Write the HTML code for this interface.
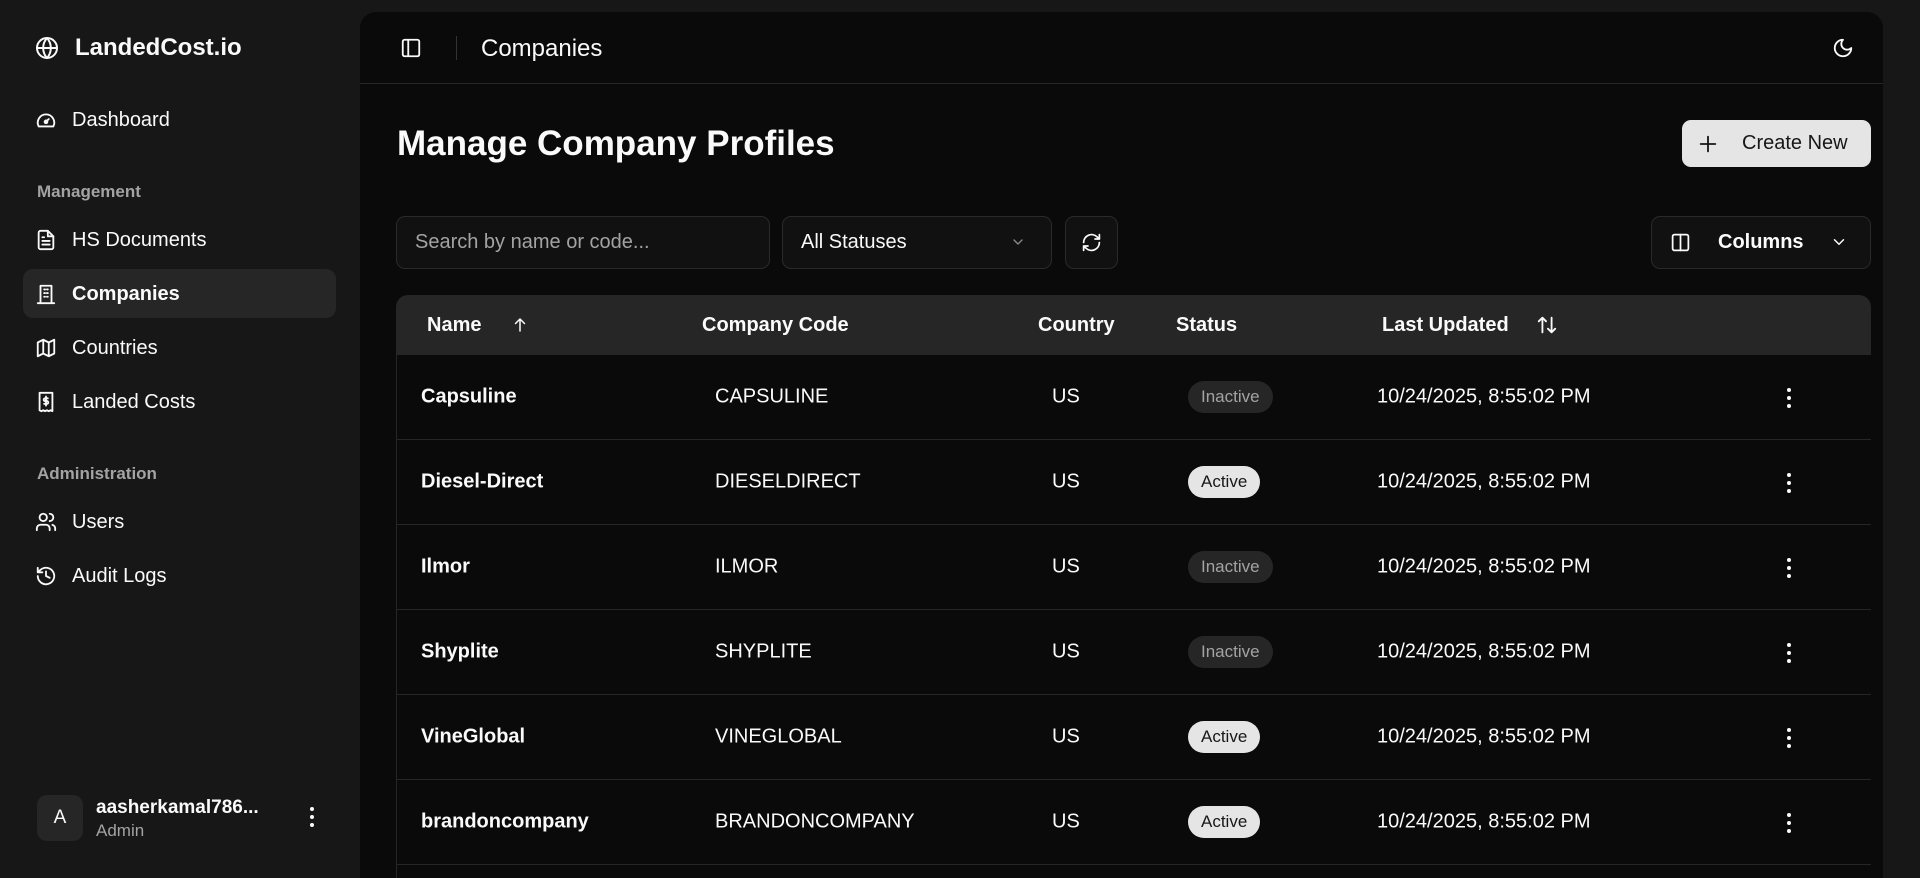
<!DOCTYPE html>
<html style="overflow:hidden;height:878px"><head><meta charset="utf-8"><style>
*{box-sizing:border-box;margin:0;padding:0}
body{width:1920px;height:878px;overflow:hidden;background:#171717;font-family:"Liberation Sans",Arial,sans-serif;color:#fafafa;position:relative}
.a{position:absolute;white-space:nowrap}
.ic{position:absolute;fill:none;stroke:#fafafa;stroke-width:2;stroke-linecap:round;stroke-linejoin:round}
.nav{font-size:20px;line-height:24px}
.lbl{font-size:17px;font-weight:bold;color:#a3a3a3}
.main{position:absolute;left:360px;top:12px;width:1523px;height:866px;background:#0a0a0a;border-radius:16px 16px 0 0}
.row{position:absolute;left:396px;width:1475px;height:85px;border-bottom:1px solid #262626;border-left:1px solid #262626;font-size:20px}
.row span{position:absolute;top:50%;transform:translateY(-50%);white-space:nowrap}
.badge{font-size:17px;padding:0 13px;height:32px;line-height:32px;border-radius:16px}
.in{background:#262626;color:#a3a3a3}
.ac{background:#e5e5e5;color:#171717}
</style></head><body>
<!-- sidebar -->
<svg class="ic" style="left:35px;top:36px" width="24" height="24" viewBox="0 0 24 24"><circle cx="12" cy="12" r="10"/><path d="M2 12h20M12 2a15 15 0 0 1 0 20M12 2a15 15 0 0 0 0 20"/></svg>
<div class="a" style="left:75px;top:34px;font-size:24px;font-weight:bold">LandedCost.io</div>

<svg class="ic" style="left:35px;top:109px" width="22" height="22" viewBox="0 0 24 24"><path d="M4 19a9 9 0 1 1 16 0z"/><path d="M12 14l3-3"/><circle cx="12" cy="14" r="1.5"/></svg>
<div class="a nav" style="left:72px;top:108px">Dashboard</div>
<div class="a lbl" style="left:37px;top:182px">Management</div>
<svg class="ic" style="left:35px;top:229px" width="22" height="22" viewBox="0 0 24 24"><path d="M14 2H6a2 2 0 0 0-2 2v16a2 2 0 0 0 2 2h12a2 2 0 0 0 2-2V8z"/><path d="M14 2v6h6M8 13h8M8 17h8M8 9h2"/></svg>
<div class="a nav" style="left:72px;top:228px">HS Documents</div>
<div class="a" style="left:23px;top:269px;width:313px;height:49px;background:#262626;border-radius:10px"></div>
<svg class="ic" style="left:35px;top:283px" width="22" height="22" viewBox="0 0 24 24"><path d="M6 22V3h12v19M3 22h18M10 7h1M13 7h1M10 11h1M13 11h1M10 15h1M13 15h1"/></svg>
<div class="a nav" style="left:72px;top:282px;font-weight:bold">Companies</div>
<svg class="ic" style="left:35px;top:337px" width="22" height="22" viewBox="0 0 24 24"><path d="M3 6l6-3 6 3 6-3v15l-6 3-6-3-6 3zM9 3v15M15 6v15"/></svg>
<div class="a nav" style="left:72px;top:336px">Countries</div>
<svg class="ic" style="left:35px;top:391px" width="22" height="22" viewBox="0 0 24 24"><path d="M5 2h14v20l-2-1-2 1-2-1-2 1-2-1-2 1-2-1zM14 8h-3a1.5 1.5 0 0 0 0 3h2a1.5 1.5 0 0 1 0 3h-3M12 6v10"/></svg>
<div class="a nav" style="left:72px;top:390px">Landed Costs</div>
<div class="a lbl" style="left:37px;top:464px">Administration</div>
<svg class="ic" style="left:35px;top:511px" width="22" height="22" viewBox="0 0 24 24"><circle cx="9" cy="7" r="4"/><path d="M2 21v-2a4 4 0 0 1 4-4h6a4 4 0 0 1 4 4v2M16 3a4 4 0 0 1 0 8M22 21v-2a4 4 0 0 0-3-3.9"/></svg>
<div class="a nav" style="left:72px;top:510px">Users</div>
<svg class="ic" style="left:35px;top:565px" width="22" height="22" viewBox="0 0 24 24"><path d="M3 12a9 9 0 1 0 3-6.7L3 8M3 3v5h5M12 7v5l4 2"/></svg>
<div class="a nav" style="left:72px;top:564px">Audit Logs</div>

<div class="a" style="left:37px;top:795px;width:46px;height:46px;background:#262626;border-radius:10px;font-size:19px;text-align:center;line-height:46px">A</div>
<div class="a" style="left:96px;top:797px;font-size:19px;font-weight:bold">aasherkamal786...</div>
<div class="a" style="left:96px;top:821px;font-size:17px;color:#a3a3a3">Admin</div>
<svg style="position:absolute;left:306px;top:805px" width="12" height="24"><circle cx="6" cy="4" r="2" fill="#fafafa"/><circle cx="6" cy="12" r="2" fill="#fafafa"/><circle cx="6" cy="20" r="2" fill="#fafafa"/></svg>

<!-- main -->
<div class="main"></div>
<div class="a" style="left:360px;top:83px;width:1523px;height:1px;background:#262626"></div>
<svg class="ic" style="left:400px;top:37px" width="22" height="22" viewBox="0 0 24 24"><rect x="3" y="3" width="18" height="18" rx="2"/><path d="M9 3v18"/></svg>
<div class="a" style="left:456px;top:36px;width:1px;height:24px;background:#333"></div>
<div class="a" style="left:481px;top:35px;font-size:24px">Companies</div>
<svg class="ic" style="left:1832px;top:37px" width="22" height="22" viewBox="0 0 24 24"><path d="M12 3a6 6 0 0 0 9 9 9 9 0 1 1-9-9z"/></svg>

<div class="a" style="left:397px;top:124px;font-size:35px;font-weight:bold">Manage Company Profiles</div>
<div class="a" style="left:1682px;top:120px;width:189px;height:47px;background:#e5e5e5;border-radius:9px;color:#171717;font-size:20px;line-height:47px;padding-left:60px">Create New</div>
<svg class="ic" style="left:1697px;top:133px;stroke:#171717" width="22" height="22" viewBox="0 0 24 24"><path d="M12 4v16M4 12h16"/></svg>

<div class="a" style="left:396px;top:216px;width:374px;height:53px;background:#111;border:1px solid #2a2a2a;border-radius:9px;font-size:20px;color:#a3a3a3;line-height:51px;padding-left:18px">Search by name or code...</div>
<div class="a" style="left:782px;top:216px;width:270px;height:53px;background:#111;border:1px solid #2a2a2a;border-radius:9px;font-size:20px;line-height:51px;padding-left:18px">All Statuses</div>
<svg class="ic" style="left:1010px;top:234px;stroke:#888" width="16" height="16" viewBox="0 0 24 24"><path d="M6 9l6 6 6-6"/></svg>
<div class="a" style="left:1065px;top:216px;width:53px;height:53px;background:#111;border:1px solid #2a2a2a;border-radius:9px"></div>
<svg class="ic" style="left:1081px;top:232px" width="21" height="21" viewBox="0 0 24 24"><path d="M3 12a9 9 0 0 1 15-6.7L21 8M21 3v5h-5M21 12a9 9 0 0 1-15 6.7L3 16M3 21v-5h5"/></svg>
<div class="a" style="left:1651px;top:216px;width:220px;height:53px;background:#111;border:1px solid #2a2a2a;border-radius:9px;font-size:20px;font-weight:bold;line-height:51px;padding-left:66px">Columns</div>
<svg class="ic" style="left:1670px;top:232px" width="21" height="21" viewBox="0 0 24 24"><rect x="3" y="3" width="18" height="18" rx="2"/><path d="M12 3v18"/></svg>
<svg class="ic" style="left:1830px;top:233px" width="18" height="18" viewBox="0 0 24 24"><path d="M6 9l6 6 6-6"/></svg>

<!-- table -->
<div class="a" style="left:396px;top:295px;width:1475px;height:60px;background:#262626;border-radius:12px 12px 0 0;font-size:20px;font-weight:bold">
<span class="a" style="left:31px;top:19px">Name</span>
<span class="a" style="left:306px;top:19px">Company Code</span>
<span class="a" style="left:642px;top:19px">Country</span>
<span class="a" style="left:780px;top:19px">Status</span>
<span class="a" style="left:986px;top:19px">Last Updated</span>
</div>
<svg class="ic" style="left:511px;top:315px" width="18" height="20" viewBox="0 0 24 24"><path d="M12 20V4M6 10l6-6 6 6"/></svg>
<svg class="ic" style="left:1535px;top:314px" width="24" height="22" viewBox="0 0 24 24"><path d="M7 20V4M3 8l4-4 4 4M17 4v16M13 16l4 4 4-4"/></svg>

<div class="row" style="top:355px"><span style="left:24px;font-weight:bold">Capsuline</span><span style="left:318px">CAPSULINE</span><span style="left:655px">US</span><span class="badge in" style="left:791px">Inactive</span><span style="left:980px">10/24/2025, 8:55:02 PM</span></div>
<div class="row" style="top:440px"><span style="left:24px;font-weight:bold">Diesel-Direct</span><span style="left:318px">DIESELDIRECT</span><span style="left:655px">US</span><span class="badge ac" style="left:791px">Active</span><span style="left:980px">10/24/2025, 8:55:02 PM</span></div>
<div class="row" style="top:525px"><span style="left:24px;font-weight:bold">Ilmor</span><span style="left:318px">ILMOR</span><span style="left:655px">US</span><span class="badge in" style="left:791px">Inactive</span><span style="left:980px">10/24/2025, 8:55:02 PM</span></div>
<div class="row" style="top:610px"><span style="left:24px;font-weight:bold">Shyplite</span><span style="left:318px">SHYPLITE</span><span style="left:655px">US</span><span class="badge in" style="left:791px">Inactive</span><span style="left:980px">10/24/2025, 8:55:02 PM</span></div>
<div class="row" style="top:695px"><span style="left:24px;font-weight:bold">VineGlobal</span><span style="left:318px">VINEGLOBAL</span><span style="left:655px">US</span><span class="badge ac" style="left:791px">Active</span><span style="left:980px">10/24/2025, 8:55:02 PM</span></div>
<div class="row" style="top:780px"><span style="left:24px;font-weight:bold">brandoncompany</span><span style="left:318px">BRANDONCOMPANY</span><span style="left:655px">US</span><span class="badge ac" style="left:791px">Active</span><span style="left:980px">10/24/2025, 8:55:02 PM</span></div>
<div class="a" style="left:396px;top:865px;width:1px;height:13px;background:#262626"></div>

<svg style="position:absolute;left:1783px;top:386px" width="12" height="24"><circle cx="6" cy="4" r="2" fill="#fafafa"/><circle cx="6" cy="12" r="2" fill="#fafafa"/><circle cx="6" cy="20" r="2" fill="#fafafa"/></svg>
<svg style="position:absolute;left:1783px;top:471px" width="12" height="24"><circle cx="6" cy="4" r="2" fill="#fafafa"/><circle cx="6" cy="12" r="2" fill="#fafafa"/><circle cx="6" cy="20" r="2" fill="#fafafa"/></svg>
<svg style="position:absolute;left:1783px;top:556px" width="12" height="24"><circle cx="6" cy="4" r="2" fill="#fafafa"/><circle cx="6" cy="12" r="2" fill="#fafafa"/><circle cx="6" cy="20" r="2" fill="#fafafa"/></svg>
<svg style="position:absolute;left:1783px;top:641px" width="12" height="24"><circle cx="6" cy="4" r="2" fill="#fafafa"/><circle cx="6" cy="12" r="2" fill="#fafafa"/><circle cx="6" cy="20" r="2" fill="#fafafa"/></svg>
<svg style="position:absolute;left:1783px;top:726px" width="12" height="24"><circle cx="6" cy="4" r="2" fill="#fafafa"/><circle cx="6" cy="12" r="2" fill="#fafafa"/><circle cx="6" cy="20" r="2" fill="#fafafa"/></svg>
<svg style="position:absolute;left:1783px;top:811px" width="12" height="24"><circle cx="6" cy="4" r="2" fill="#fafafa"/><circle cx="6" cy="12" r="2" fill="#fafafa"/><circle cx="6" cy="20" r="2" fill="#fafafa"/></svg>
</body></html>
